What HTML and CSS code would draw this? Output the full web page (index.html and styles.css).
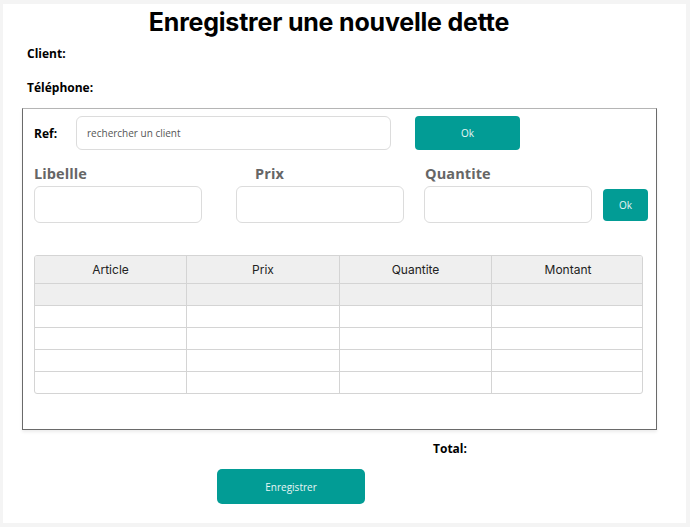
FILE: index.html
```html
<!DOCTYPE html>
<html lang="fr">
<head>
<meta charset="utf-8">
<title>Enregistrer une nouvelle dette</title>
<link rel="stylesheet" href="styles.css">
</head>
<body>
<div class="page">
  <h1 class="title">Enregistrer une nouvelle dette</h1>
  <div class="info">
    <div class="info-line">Client:</div>
    <div class="info-line">Téléphone:</div>
  </div>
  <div class="box">
    <div class="ref-row">
      <span class="ref-label">Ref:</span>
      <div class="input ref-input">rechercher un client</div>
      <button class="btn btn-ok">Ok</button>
    </div>
    <div class="fields-row">
      <div class="field">
        <div class="field-label">Libellle</div>
        <div class="input field-input"></div>
      </div>
      <div class="field field-prix">
        <div class="field-label">Prix</div>
        <div class="input field-input"></div>
      </div>
      <div class="field field-qte">
        <div class="field-label">Quantite</div>
        <div class="input field-input"></div>
      </div>
      <button class="btn btn-small">Ok</button>
    </div>
    <div class="table">
      <div class="cell head">Article</div>
      <div class="cell head">Prix</div>
      <div class="cell head">Quantite</div>
      <div class="cell head">Montant</div>
      <div class="cell grey"></div><div class="cell grey"></div><div class="cell grey"></div><div class="cell grey"></div>
      <div class="cell"></div><div class="cell"></div><div class="cell"></div><div class="cell"></div>
      <div class="cell"></div><div class="cell"></div><div class="cell"></div><div class="cell"></div>
      <div class="cell"></div><div class="cell"></div><div class="cell"></div><div class="cell"></div>
      <div class="cell last"></div><div class="cell last"></div><div class="cell last"></div><div class="cell last"></div>
    </div>
  </div>
  <div class="total-row"><span class="total">Total:</span></div>
  <div class="save-row"><button class="btn btn-save">Enregistrer</button></div>
</div>
</body>
</html>
```
FILE: styles.css
```css
* { box-sizing: border-box; }
html, body { margin: 0; padding: 0; }
body {
  background: #f4f4f4;
  font-family: "Open Sans", "Liberation Sans", sans-serif;
  color: #000;
}
.page {
  margin: 4px 4px 4px 3px;
  height: 519px;
  background: #fff;
  padding-top: 5px;
}
.title {
  margin: 0;
  padding-right: 31px;
  text-align: center;
  font-family: "Inter", "Roboto", sans-serif;
  font-weight: 700;
  font-size: 25px;
  line-height: 26px;
  letter-spacing: -0.2px;
}
.info {
  padding-left: 24px;
  margin-top: 4px;
}
.info-line {
  font-size: 12px;
  font-weight: 700;
  line-height: 17px;
  height: 34px;
  padding-top: 6px;
}
.box {
  margin: 1px 0 0 19px;
  width: 635px;
  height: 322px;
  border: 1px solid #6a6a6a;
  border-top-color: #b5b5b5;
  box-shadow: 0 2px 3px rgba(0,0,0,0.08);
  padding: 7px 0 0 11px;
}
.ref-row {
  display: flex;
  align-items: center;
  height: 34px;
}
.ref-label {
  font-size: 12px;
  font-weight: 700;
  width: 42px;
}
.input {
  border: 1px solid #dcdcdc;
  border-radius: 6px;
  background: #fff;
}
.ref-input {
  width: 315px;
  height: 34px;
  font-size: 10px;
  color: #555;
  line-height: 32px;
  padding-left: 10px;
}
.btn {
  border: none;
  background: #029c95;
  color: #e8f6f5;
  font-family: "Open Sans", "Liberation Sans", sans-serif;
  font-size: 10px;
  border-radius: 4px;
  padding: 0;
}
.btn-ok {
  margin-left: 24px;
  width: 105px;
  height: 34px;
}
.fields-row {
  display: flex;
  align-items: flex-start;
  margin-top: 15px;
}
.field-label {
  font-size: 14.5px;
  font-weight: 700;
  color: #666;
  line-height: 18px;
  height: 21px;
  letter-spacing: 0.1px;
}
.field-input {
  width: 168px;
  height: 37px;
}
.field-prix { margin-left: 34px; }
.field-prix .field-label { padding-left: 19px; }
.field-qte { margin-left: 20px; }
.field-qte .field-label { padding-left: 1px; }
.btn-small {
  margin: 24px 0 0 11px;
  width: 45px;
  height: 32px;
}
.table {
  margin-top: 32px;
  width: 609px;
  display: grid;
  grid-template-columns: 152px 153px 152px 152px;
  border: 1px solid #d4d4d4;
  border-radius: 3px;
  overflow: hidden;
}
.cell {
  height: 22px;
  border-bottom: 1px solid #d4d4d4;
  border-right: 1px solid #d4d4d4;
}
.cell:nth-child(4n) { border-right: none; }
.cell.last { border-bottom: none; height: 21px; }
.head {
  height: 28px;
  background: #efefef;
  font-family: "Inter", "Roboto", sans-serif;
  font-size: 12px;
  color: #222;
  text-align: center;
  line-height: 27px;
}
.grey { background: #efefef; }
.total-row {
  padding-left: 430px;
  margin-top: 6px;
  height: 17px;
}
.total {
  font-size: 12px;
  font-weight: 700;
  line-height: 17px;
}
.save-row {
  padding-left: 214px;
  margin-top: 16px;
}
.btn-save {
  width: 148px;
  height: 35px;
  border-radius: 5px;
}
```
